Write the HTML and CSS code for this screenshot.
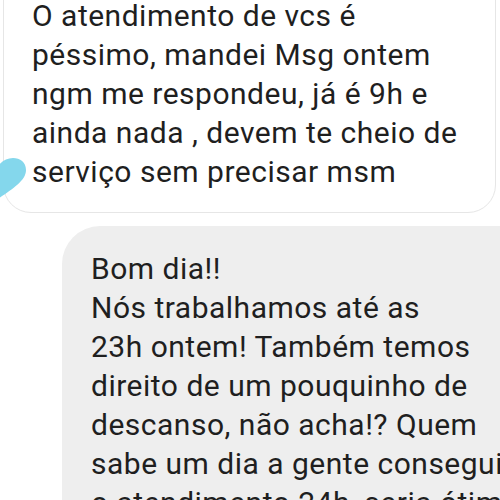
FILE: index.html
```html
<!DOCTYPE html>
<html lang="pt">
<head>
<meta charset="utf-8">
<link rel="stylesheet" href="styles.css">
</head>
<body>
<div class="chat">
  <div class="msg msg-in">
    <p class="text">O atendimento de vcs é<br>péssimo, mandei Msg ontem<br>ngm me respondeu, já é 9h e<br>ainda nada , devem te cheio de<br>serviço sem precisar msm</p>
    <svg class="reaction" width="60" height="44" viewBox="0 0 60 44"><path d="M30 42 C16 32 2 24 2 13 C2 5 8 1 15 1 C21 1 26 4 30 9 C34 4 39 1 45 1 C52 1 58 5 58 13 C58 24 44 32 30 42 Z" fill="#84d7ec"/></svg>
  </div>
  <div class="msg msg-out">
    <p class="text">Bom dia!!<br>Nós trabalhamos até as<br>23h ontem! Também temos<br>direito de um pouquinho de<br>descanso, não acha!? Quem<br>sabe um dia a gente conseguimos<br>o atendimento 24h, seria ótimo</p>
  </div>
</div>
</body>
</html>
```
FILE: styles.css
```css
html, body {
  margin: 0;
  padding: 0;
  background: #ffffff;
  width: 500px;
  height: 500px;
  overflow: hidden;
}
.chat {
  display: flex;
  flex-direction: column;
  font-family: Roboto, "Noto Sans", sans-serif;
  color: #1f1f1f;
}
.text {
  margin: 0;
  font-size: 30px;
  line-height: 39px;
  letter-spacing: 0.5px;
  white-space: nowrap;
}
.msg-in {
  position: relative;
  margin: -40px 4px 0 3px;
  padding: 35px 0 21px 28px;
  background: #ffffff;
  border: 1px solid #e6e6e6;
  border-radius: 0 0 28px 28px;
}
.reaction {
  position: absolute;
  left: -36px;
  top: 196px;
}
.msg-out {
  margin: 13px -40px 0 62px;
  padding: 23px 0 0 29px;
  background: #eeeeee;
  border-radius: 38px 38px 0 0;
  height: 300px;
  overflow: hidden;
}
```
